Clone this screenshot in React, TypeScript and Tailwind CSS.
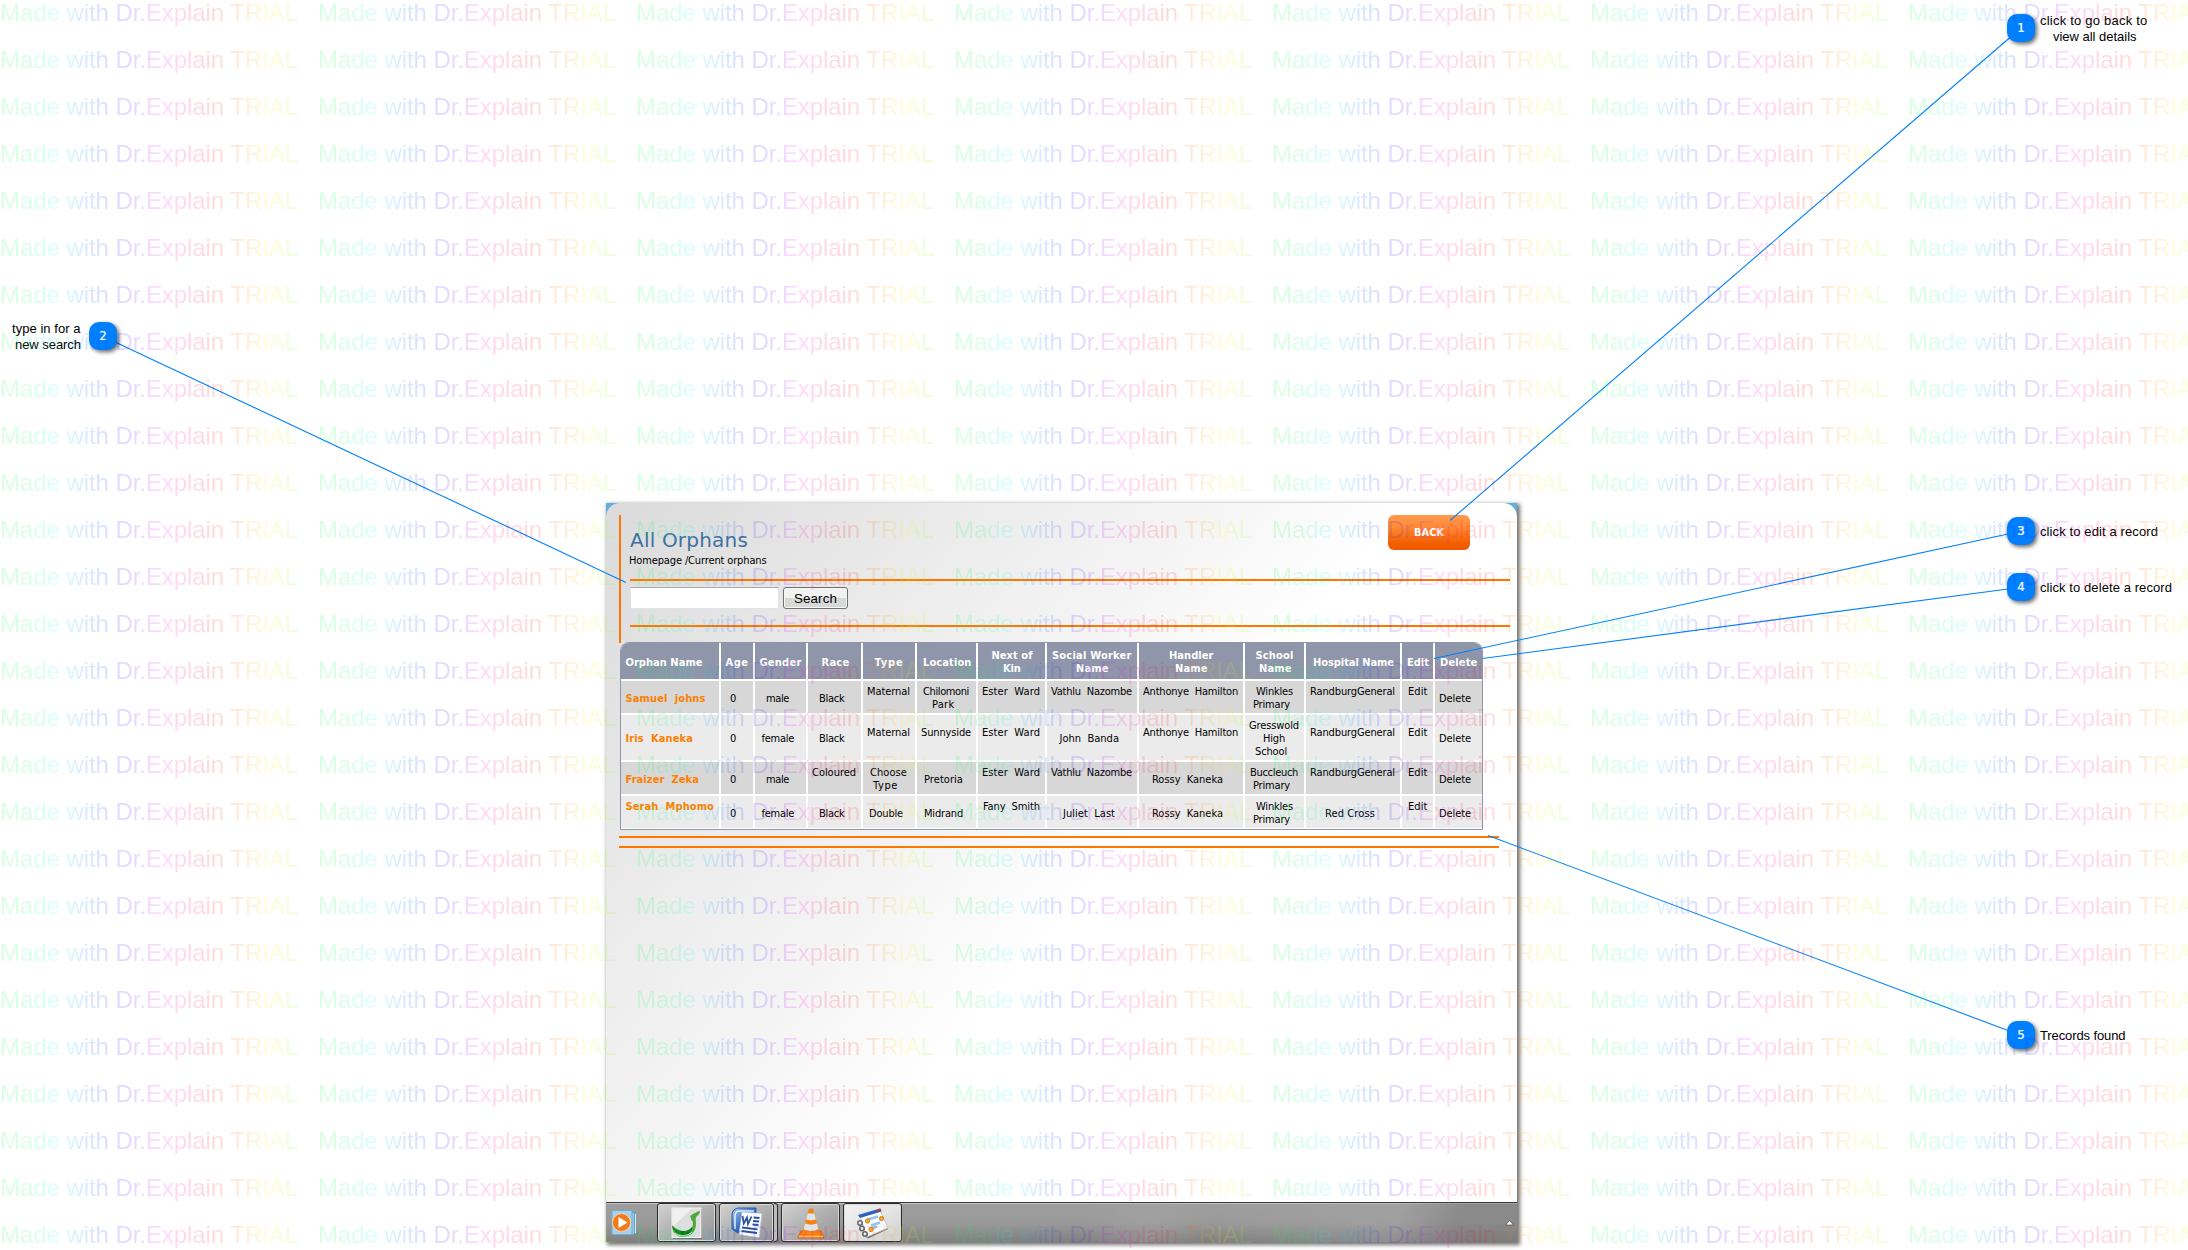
import { useLayoutEffect, useRef } from "react";
import clsx from "clsx";

/** Single line of text whose tracking is adjusted so that it spans `w` pixels. */
function Fit({ t, w, className }: { t: string; w: number; className?: string }) {
  const ref = useRef<HTMLSpanElement>(null);
  useLayoutEffect(() => {
    const el = ref.current;
    if (!el) return;
    el.style.letterSpacing = "0px";
    const natural = el.getBoundingClientRect().width;
    el.style.letterSpacing = `${(w + 1 - natural) / t.length}px`;
  }, [t, w]);
  return (
    <span ref={ref} className={clsx("inline-block whitespace-pre", className)}>
      {t}
    </span>
  );
}

type Line = [string, number, number] | null;

const headers: Line[][] = [
  [["Orphan Name", 626, 76]],
  [["Age", 726, 22]],
  [["Gender", 760, 41]],
  [["Race", 822, 27]],
  [["Type", 875, 28]],
  [["Location", 923.5, 47.5]],
  [["Next of", 992, 40], ["Kin", 1003.5, 16.5]],
  [["Social Worker", 1052.5, 78.5], ["Name", 1076.5, 31.5]],
  [["Handler", 1169.5, 43.5], ["Name", 1175.5, 31.5]],
  [["School", 1256, 37], ["Name", 1259.5, 31.5]],
  [["Hospital Name", 1313.5, 80]],
  [["Edit", 1407.5, 21]],
  [["Delete", 1440.5, 36.5]],
];

const male: Line[] = [["male", 766.5, 22]];
const female: Line[] = [["female", 762, 31.5]];
const zero: Line[] = [["0", 730.5, 6]];
const black: Line[] = [["Black", 819.5, 24.5]];
const maternal: Line[] = [["Maternal", 867.5, 42], null];
const ester: Line[] = [["Ester  Ward", 982.5, 57], null];
const vathlu: Line[] = [["Vathlu  Nazombe", 1051.5, 80], null];
const anthonye: Line[] = [["Anthonye  Hamilton", 1143.5, 94], null];
const rossy: Line[] = [["Rossy  Kaneka", 1152.5, 70]];
const winkles: Line[] = [["Winkles", 1256.5, 36], ["Primary", 1253.5, 36]];
const randburg: Line[] = [["RandburgGeneral", 1310.5, 84], null];
const edit: Line[] = [["Edit", 1408.5, 18.5], null];
const del: Line[] = [["Delete", 1439.5, 31]];

const rows: Line[][][] = [
  [
    [["Samuel  johns", 626, 79]], zero, male, black, maternal,
    [["Chilomoni", 923.5, 45], ["Park", 932.5, 21.5]],
    ester, vathlu, anthonye, winkles, randburg, edit, del,
  ],
  [
    [["Iris  Kaneka", 626, 66.5]], zero, female, black, maternal,
    [["Sunnyside", 921.5, 49], null],
    ester, [["John  Banda", 1060, 58.5]], anthonye,
    [["Gresswold", 1249.5, 49], ["High", 1263.5, 21], ["School", 1255.5, 31]],
    randburg, edit, del,
  ],
  [
    [["Fraizer  Zeka", 626, 72.5]], zero, male,
    [["Coloured", 812.5, 43], null],
    [["Choose", 870.5, 36], ["Type", 873.5, 24]],
    [["Pretoria", 924.5, 38]],
    ester, vathlu, rossy,
    [["Buccleuch", 1250.5, 47], ["Primary", 1253.5, 36]],
    randburg, edit, del,
  ],
  [
    [["Serah  Mphomo", 626, 87.5], null], zero, female, black,
    [["Double", 869.5, 33]],
    [["Midrand", 924.5, 38]],
    [["Fany  Smith", 983.5, 56], null],
    [["Juliet  Last", 1063.5, 51]],
    rossy, winkles,
    [["Red Cross", 1325.5, 49]],
    edit, del,
  ],
];

const colStart = [621, 721, 755, 808, 863, 917, 978, 1047, 1139, 1245, 1306, 1402, 1435];
const grid =
  "grid gap-x-[2px] grid-cols-[98px_32px_51px_53px_52px_59px_67px_90px_104px_59px_94px_31px_47px]";
const rowHeights = ["h-[32px]", "h-[45px]", "h-[32px]", "h-[32px]"];

function Cell({ lines, col, className }: { lines: Line[]; col: number; className: string }) {
  return (
    <div className={clsx("flex flex-col justify-center pt-[2px]", className)}>
      {lines.map((l, i) => (
        <div key={i} className="h-[13px] leading-[13px]" style={{ paddingLeft: l ? l[1] - colStart[col] - 0.5 : 0 }}>
          {l && <Fit t={l[0]} w={l[2]} />}
        </div>
      ))}
    </div>
  );
}

function OrphanTable() {
  return (
    <div className="ml-[14px] w-[863px] overflow-hidden rounded-t-[9px] border border-[#8f96a9] bg-white text-[11px] [font-family:'DejaVu_Sans_Condensed','DejaVu_Sans',sans-serif] [font-stretch:condensed]">
      <div className={clsx(grid, "h-[36px] font-bold text-white")}>
        {headers.map((h, c) => (
          <Cell key={c} lines={h} col={c} className="bg-[#8f96a9]" />
        ))}
      </div>
      {rows.map((r, i) => (
        <div key={i} className={clsx(grid, rowHeights[i], "mt-[2px]")}>
          {r.map((lines, c) => (
            <Cell
              key={c}
              lines={lines}
              col={c}
              className={clsx(
                i % 2 ? "bg-[#ebebeb]" : "bg-[#d7d7d7]",
                c === 0 ? "font-bold text-[#ff7f00]" : "text-black",
              )}
            />
          ))}
        </div>
      ))}
      <div className="h-px bg-white" />
    </div>
  );
}

function PlayerIcon() {
  return (
    <svg width="28" height="28" viewBox="0 0 28 28">
      <path d="M4 3h21v22l-4 1H4z" fill="#5fa5c9" />
      <path d="M22 4v21M24.500 5v19" stroke="#cfeaf6" strokeWidth="1" />
      <rect x="1" y="1.500" width="20" height="24" rx="1" fill="#a5d2ea" stroke="#74aecd" />
      <circle cx="10.500" cy="13.500" r="9" fill="#f47a1c" stroke="#fbd0a8" strokeWidth="1" />
      <path d="M7.500 8l9 5.500-9 5.500z" fill="#fff" />
    </svg>
  );
}
function LeafIcon() {
  return (
    <svg width="32" height="32" viewBox="0 0 32 32">
      <rect x="2" y="2" width="29" height="30" fill="#555" opacity=".6" />
      <rect x="1" y="1" width="29" height="29.500" fill="#dedede" stroke="#f6f6f6" />
      <path d="M1.500 20L21 1.500H1.500z" fill="#f0f0f0" />
      <path d="M29 4c-2 1-3 0-4 2-2-1-3 2-6 3l1 2c-1 1 2 3 2 5 0 5-3 8-8 8-5 0-9-2-13-6 0 6 3 11 10 12 8 0 14-5 14-13 0-4-1-6 1-8 2-1 3-3 3-5z" fill="#4fa83c" />
      <path d="M1 19c3 5 14 8 20 1 1 5-3 8-9 8-6-1-10-4-11-9z" fill="#0f7a14" />
      <path d="M4 26c4 4 12 4 17-1" fill="none" stroke="#c5e8b8" strokeWidth="1" />
    </svg>
  );
}
function WordIcon() {
  return (
    <svg width="32" height="32" viewBox="0 0 32 32">
      <defs>
        <linearGradient id="word" x1="0" y1="0" x2="1" y2="1">
          <stop offset="0" stopColor="#a9cdf2" />
          <stop offset=".5" stopColor="#3b6fc0" />
          <stop offset="1" stopColor="#173f8f" />
        </linearGradient>
      </defs>
      <path d="M8 1h17v25H7l-6-4V8c0-4 3-7 7-7z" fill="url(#word)" stroke="#2b5aa8" />
      <path d="M4 22V9c0-4 2-5 5-5h14" fill="none" stroke="#e4f0fc" strokeWidth="1.500" />
      <path d="M11 5l20 1.500-3 24-20-3z" fill="#fbfcff" stroke="#b9c6dc" strokeWidth=".7" />
      <path d="M11.500 9l1.300 7.500L16 10.500l1 6.500 3.500-7.500" fill="none" stroke="#2a4f9d" strokeWidth="1.700" />
      <path d="M22.500 10.500l6 .5M22 14l6 .5M21.500 17.500l6 .5M11 20.500l15.500 1.800M10.500 24l15.500 2" stroke="#2a4f9d" strokeWidth="1.800" />
    </svg>
  );
}
function ConeIcon() {
  return (
    <svg width="28" height="32" viewBox="0 0 28 32">
      <path d="M4 24h20l3 7H1z" fill="#f57f0b" stroke="#d96404" />
      <path d="M12 1.500h4l6.500 24c-4 3-13 3-17 0z" fill="#f58413" />
      <path d="M10.700 6.500h6.600l1.600 6c-3 1-6.800 1-9.800 0z" fill="#dfe5ea" />
      <path d="M8 16.500c4 1.500 8 1.500 12 0l1.400 5.500c-4 2.500-10.800 2.500-14.800 0z" fill="#dfe5ea" />
      <path d="M2 29.500h24" stroke="#ffc069" strokeWidth="1.500" />
    </svg>
  );
}
function NotebookIcon() {
  return (
    <svg width="34" height="32" viewBox="0 0 34 32">
      <path d="M9 29l22-9 1 2-20 9.500z" fill="#7a6a55" />
      <path d="M4 9l20-6 8 18-21 9z" fill="#f8fbff" stroke="#b5bcc6" strokeWidth=".8" />
      <path d="M2 8l22-6.500 1.500 3L4 11z" fill="#2e62b8" />
      <path d="M21 2.400l3.500-1 1 2-3.500 1z" fill="#d8342a" />
      <path d="M12 12.500l10-3M15 18.500l9-3M14 22l7-2.500" stroke="#93c5ec" strokeWidth="2.600" />
      <g fill="#eee" stroke="#65686c" strokeWidth="1.600">
        <circle cx="4" cy="16" r="2.200" /><circle cx="6" cy="21.500" r="2.200" /><circle cx="9" cy="27" r="2.200" />
      </g>
      <g fill="#f7a51c" stroke="#b66a06" strokeWidth=".6">
        <circle cx="11.500" cy="14" r="2.200" /><circle cx="25.500" cy="11.500" r="2.200" /><circle cx="15" cy="22.500" r="2.200" />
      </g>
    </svg>
  );
}

const taskButton =
  "flex h-[39px] w-[59px] items-center justify-center rounded-[3px] border border-[#2c2c2c] shadow-[inset_0_0_0_1px_#d9d9d9]";
const taskFill = "bg-linear-to-br from-[#d2d2d2] via-[#b0b0b0] to-[#949494]";

function Taskbar() {
  return (
    <div className="flex h-[40px] border-t border-[#3a3a3a] bg-linear-to-b from-[#9d9d9d] via-[#9a9a9a] to-[#808080] shadow-[inset_0_1px_0_#c4c4c4]">
      <div className="flex w-[51px] items-center pl-[5px]">
        <PlayerIcon />
      </div>
      <div className="flex gap-[3px]">
        <div className={clsx(taskButton, taskFill)}><LeafIcon /></div>
        <div className="flex">
          <div className={clsx("flex h-[39px] w-[55px] items-center justify-center rounded-[3px] border border-[#2c2c2c] shadow-[inset_0_0_0_1px_#d9d9d9]", taskFill)}>
            <WordIcon />
          </div>
          <div className="h-[39px] w-[4px] rounded-r-[3px] border-y border-r border-[#2c2c2c] bg-[#bdbdbd]" />
        </div>
        <div className={clsx(taskButton, taskFill)}><ConeIcon /></div>
        <div className={clsx(taskButton, "bg-linear-to-br from-[#f3f3f3] via-[#e4e4e4] to-[#cfcfcf]")}><NotebookIcon /></div>
      </div>
      <div className="flex flex-1 items-center justify-end bg-[linear-gradient(100deg,transparent_30%,#aaaaaa55_40%,transparent_50%,#aaaaaa55_80%,#77777777_90%)] pr-[3px]">
        <svg width="9" height="6" viewBox="0 0 9 6">
          <path d="M4.500.5L8.500 5H.5z" fill="#fff" stroke="#444" strokeWidth=".7" />
        </svg>
      </div>
    </div>
  );
}

function Panel() {
  return (
    <div className="ml-[606px] h-[739px] w-[911px] bg-[#5fb0de] shadow-[2px_2px_4px_1px_rgba(0,0,0,0.55)]">
      <div className="flex h-full flex-col rounded-t-[14px] bg-[linear-gradient(130deg,#dadada_0%,#e5e5e5_15%,#eeeeee_28%,#f5f5f5_40%,#ffffff_53%)]">
        <div className="flex h-[139px] pt-[12px] pl-[13px]">
          <div className="h-[128px] w-[2px] shrink-0 bg-[#ff7700]" />
          <div className="ml-[9px] w-[880px]">
            <div className="flex h-[64px] justify-between">
              <div className="pt-[12px]">
                <div className="h-[27px] text-[20px] leading-[26px] text-[#3f70a3] [font-family:'DejaVu_Sans',sans-serif]">
                  <Fit t="All Orphans" w={117} />
                </div>
                <div className="-ml-[1px] h-[14px] text-[11px] leading-[14px] [font-family:'DejaVu_Sans_Condensed','DejaVu_Sans',sans-serif] [font-stretch:condensed]">
                  <Fit t="Homepage /Current orphans" w={136.5} />
                </div>
              </div>
              <div className="mr-[40px] flex h-[35px] w-[82px] items-center justify-center rounded-[6px] bg-[linear-gradient(#ff9a4d_0%,#ff8a35_35%,#f25f00_80%,#ee5a00_100%)] pt-[1px] text-[11px] font-bold text-white [font-family:'DejaVu_Sans_Condensed','DejaVu_Sans',sans-serif] [font-stretch:condensed]">
                <Fit t="BACK" w={29} />
              </div>
            </div>
            <div className="h-[2px] bg-[#ff7700]" />
            <div className="flex h-[44px] gap-[4px] pt-[6px]">
              <div className="h-[22px] w-[149px] rounded-[1px] border border-[#e0e3ea] border-t-[#ababb0] bg-white" />
              <div className="flex h-[22px] w-[65px] items-center justify-center rounded-[3px] border border-[#707070] bg-linear-to-b from-[#f2f2f2] from-50% to-[#d8d8d8] to-50% pt-px text-[13.333px] text-black shadow-[inset_0_0_0_1px_#f6f6f6] [font-family:'Liberation_Sans',sans-serif]">
                <Fit t="Search" w={42} />
              </div>
            </div>
            <div className="h-[2px] bg-[#ff7700]" />
          </div>
        </div>
        <OrphanTable />
        <div className="mt-[6px] ml-[13px] h-[12px] w-[880px] border-y-2 border-[#ff7700]" />
        <div className="flex-1" />
        <Taskbar />
      </div>
    </div>
  );
}

const callouts = [
  { n: "1", pos: "left-[2007px] top-[14px]" },
  { n: "2", pos: "left-[89px] top-[322px]" },
  { n: "3", pos: "left-[2007px] top-[517px]" },
  { n: "4", pos: "left-[2007px] top-[573px]" },
  { n: "5", pos: "left-[2007px] top-[1021px]" },
];

const notes = [
  { t: "click to go back to", w: 106.5, pos: "left-[2040px] top-[13px]" },
  { t: "view all details", w: 82.5, pos: "left-[2053px] top-[29px]" },
  { t: "type in for a", w: 67.5, pos: "left-[12px] top-[321px]" },
  { t: "new search", w: 65, pos: "left-[15px] top-[337px]" },
  { t: "click to edit a record", w: 117, pos: "left-[2040px] top-[524px]" },
  { t: "click to delete a record", w: 131, pos: "left-[2040px] top-[580px]" },
  { t: "Trecords found", w: 84.5, pos: "left-[2040px] top-[1028px]" },
];

function Annotations() {
  return (
    <div className="absolute inset-0 [font-family:'Liberation_Sans',sans-serif]">
      <svg className="absolute inset-0" width="2188" height="1250" stroke="#0080ff" strokeWidth="1.1">
        <path d="M2010 37.500L1450 520.500M115 342L626 582.500M2008 534L1434 658.500M2008 589L1482.500 658.500M2008 1030.500L1488 835.500" fill="none" />
      </svg>
      {callouts.map((c) => (
        <div
          key={c.n}
          className={clsx(
            "absolute flex h-[28px] w-[28px] items-center justify-center rounded-[10px] bg-[#0080ff] text-[13px] text-white shadow-[2px_2px_4px_rgba(0,0,0,0.6)] [font-family:'DejaVu_Sans_Condensed','DejaVu_Sans',sans-serif] [font-stretch:condensed] [-webkit-text-stroke:0.2px_white]",
            c.pos,
          )}
        >
          {c.n}
        </div>
      ))}
      {notes.map((n) => (
        <div key={n.t} className={clsx("absolute text-[13px] leading-[16px] text-black", n.pos)}>
          <Fit t={n.t} w={n.w} />
        </div>
      ))}
    </div>
  );
}

function Watermark() {
  return (
    <div className="pointer-events-none absolute inset-0 overflow-hidden">
      {Array.from({ length: 27 }, (_, r) => (
        <div key={r} className="flex h-[47px] w-[2400px]">
          {Array.from({ length: 7 }, (_, c) => (
            <div key={c} className="w-[318px] shrink-0">
              <Fit
                t="Made with Dr.Explain TRIAL"
                w={297}
                className="bg-[linear-gradient(90deg,#00ff40_0%,#00ff70_9%,#00ffff_20%,#0070ff_29%,#2010ff_38%,#6000ff_45%,#ff00ff_54%,#ff0060_63%,#ff0000_72%,#ff7000_80%,#ffff00_91%,#60ff00_100%)] bg-clip-text text-[24px] leading-[26px] text-transparent opacity-[0.145] [font-family:'Liberation_Sans',sans-serif]"
              />
            </div>
          ))}
        </div>
      ))}
    </div>
  );
}

export default function App() {
  return (
    <div className="relative h-[1250px] w-[2188px] overflow-hidden bg-white pt-[503px] text-black">
      <Panel />
      <Annotations />
      <Watermark />
    </div>
  );
}
